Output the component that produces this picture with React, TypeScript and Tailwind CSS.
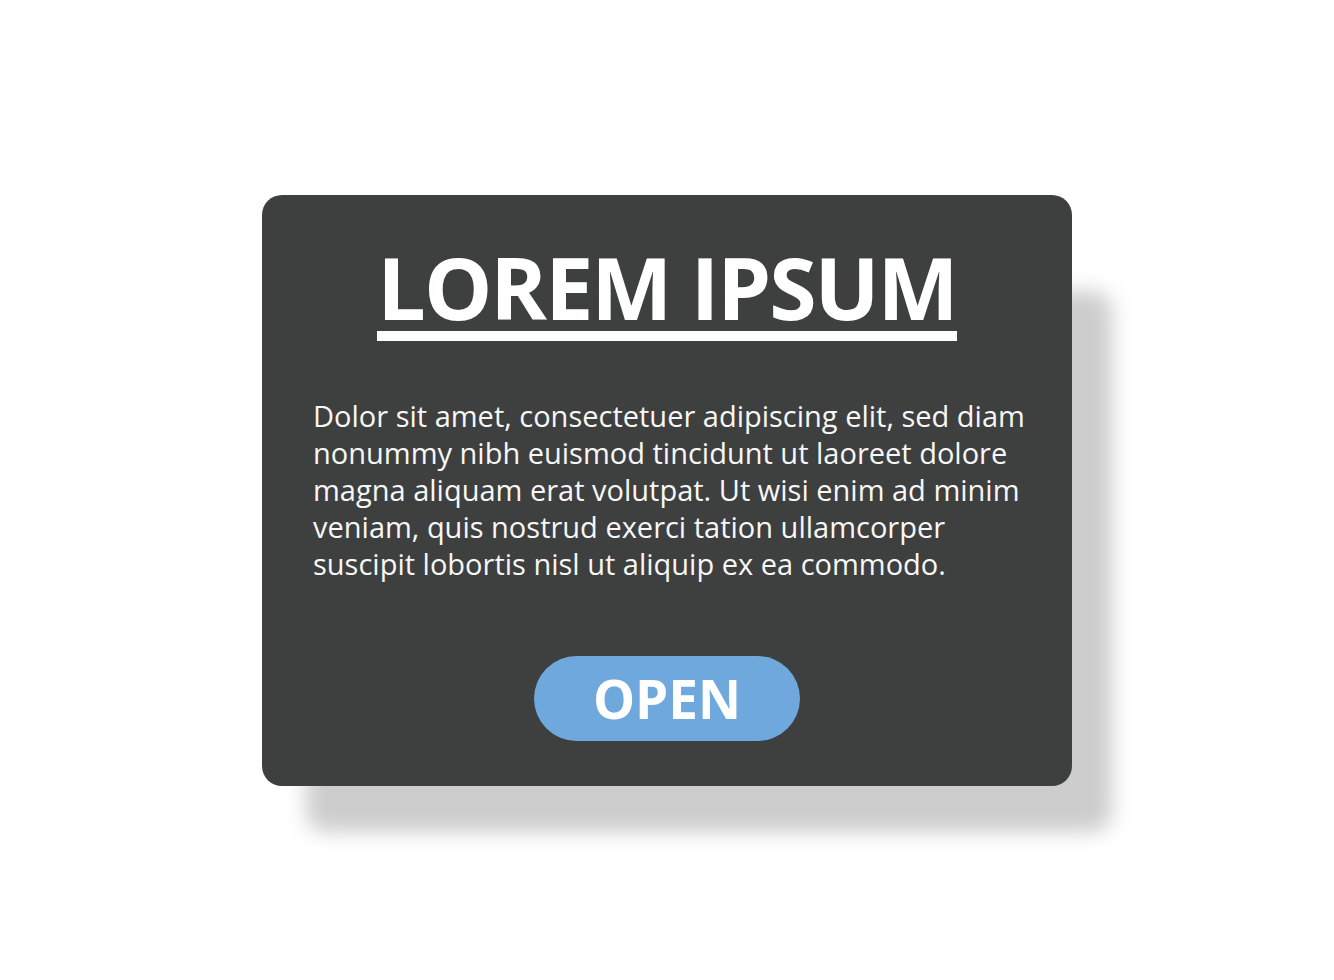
import React from "react";

const lines = [
  "Dolor sit amet, consectetuer adipiscing elit, sed diam",
  "nonummy nibh euismod tincidunt ut laoreet dolore",
  "magna aliquam erat volutpat. Ut wisi enim ad minim",
  "veniam, quis nostrud exerci tation ullamcorper",
  "suscipit lobortis nisl ut aliquip ex ea commodo.",
];

export default function App() {
  return (
    <div
      className="flex h-[980px] w-full items-center justify-center bg-white"
      style={{ fontFamily: '"Open Sans", "Noto Sans", Arial, sans-serif' }}
    >
      <div className="relative isolate">
        {/* soft drop shadow sitting behind the card */}
        <div className="absolute -z-10 left-[44px] right-[-40px] top-[96px] bottom-[-46px] rounded-[20px] bg-[#cdcdcd] blur-[10px]" />
        <div className="flex w-[810px] flex-col items-center rounded-[20px] bg-[#3e3f3f] pt-[49px] pb-[45px]">
          <div className="inline-flex flex-col items-stretch">
            <h1 className="text-[86px] font-bold leading-[86px] tracking-[-2px] text-white">
              LOREM IPSUM
            </h1>
            <div className="mt-[1px] h-[10px] bg-white" />
          </div>
          <p className="mt-[56px] self-start pl-[51px] text-[29px] leading-[37px] text-[#f7f7f7]">
            {lines.map((l) => (
              <span key={l} className="block whitespace-nowrap">
                {l}
              </span>
            ))}
          </p>
          <button className="mt-[74px] flex h-[85px] w-[266px] items-center justify-center rounded-full bg-[#6fa8dc] text-[53px] font-bold leading-none text-white">
            OPEN
          </button>
        </div>
      </div>
    </div>
  );
}
